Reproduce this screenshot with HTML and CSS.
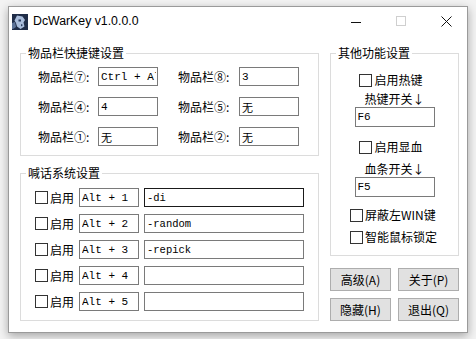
FILE: index.html
```html
<!DOCTYPE html>
<html lang="zh-CN">
<head>
<meta charset="utf-8">
<title>DcWarKey v1.0.0.0</title>
<link rel="stylesheet" href="styles.css">
</head>
<body>
<div class="window">
  <div class="titlebar">
    <svg class="app-icon" viewBox="0 0 16 16" aria-hidden="true">
      <rect width="16" height="16" fill="#1f2d48"/>
      <path d="M5 1.5 L10.5 2.5 L13 6 L11.5 8.5 L12.5 12.5 L8.5 15 L5 12.5 L4 9 L2.5 6.5 Z" fill="#a9bddb"/>
      <path d="M6.5 5.5 h2.5 v2 h-2.5 z M9 10 l2 1 l-2 1.5 z" fill="#2a3c5e"/>
      <path d="M0 9 L3 8 L4 13 L1 15 L0 15 Z" fill="#5d7499"/>
    </svg>
    <span class="title">DcWarKey v1.0.0.0</span>
    <div class="controls">
      <span class="ctl ctl-min"><svg width="10" height="1" viewBox="0 0 10 1"><rect width="10" height="1" fill="#111"/></svg></span>
      <span class="ctl ctl-max"><svg width="10" height="10" viewBox="0 0 10 10"><rect x="0.5" y="0.5" width="9" height="9" fill="none" stroke="#cfcfcf"/></svg></span>
      <span class="ctl ctl-close"><svg width="11" height="11" viewBox="0 0 11 11"><path d="M0.5 0.5 L10.5 10.5 M10.5 0.5 L0.5 10.5" stroke="#111" stroke-width="1"/></svg></span>
    </div>
  </div>

  <div class="client">
    <div class="col-left">
      <fieldset class="group">
        <legend>物品栏快捷键设置</legend>
        <div class="items-grid">
          <span class="lbl">物品栏⑦:</span><input class="field key" type="text" value="Ctrl + Alt + 7">
          <span class="lbl">物品栏⑧:</span><input class="field key" type="text" value="3">
          <span class="lbl">物品栏④:</span><input class="field key" type="text" value="4">
          <span class="lbl">物品栏⑤:</span><input class="field key" type="text" value="无">
          <span class="lbl">物品栏①:</span><input class="field key" type="text" value="无">
          <span class="lbl">物品栏②:</span><input class="field key" type="text" value="无">
        </div>
      </fieldset>

      <fieldset class="group group-chat">
        <legend>喊话系统设置</legend>
        <div class="chat">
          <div class="chat-row"><span class="cb"></span><span class="cb-text">启用</span><input class="field key alt" type="text" value="Alt + 1"><input class="field msg focus" type="text" value="-di"></div>
          <div class="chat-row"><span class="cb"></span><span class="cb-text">启用</span><input class="field key alt" type="text" value="Alt + 2"><input class="field msg" type="text" value="-random"></div>
          <div class="chat-row"><span class="cb"></span><span class="cb-text">启用</span><input class="field key alt" type="text" value="Alt + 3"><input class="field msg" type="text" value="-repick"></div>
          <div class="chat-row"><span class="cb"></span><span class="cb-text">启用</span><input class="field key alt" type="text" value="Alt + 4"><input class="field msg" type="text" value=""></div>
          <div class="chat-row"><span class="cb"></span><span class="cb-text">启用</span><input class="field key alt" type="text" value="Alt + 5"><input class="field msg" type="text" value=""></div>
        </div>
      </fieldset>
    </div>

    <div class="col-right">
      <fieldset class="group">
        <legend>其他功能设置</legend>
        <div class="other">
          <div class="check-row centered"><span class="cb"></span><span class="cb-text">启用热键</span></div>
          <div class="sub-label">热键开关↓</div>
          <input class="field hk" type="text" value="F6">
          <div class="check-row centered gap-big"><span class="cb"></span><span class="cb-text">启用显血</span></div>
          <div class="sub-label gap-mid">血条开关↓</div>
          <input class="field hk" type="text" value="F5">
          <div class="check-row left gap-lg"><span class="cb"></span><span class="cb-text">屏蔽左WIN键</span></div>
          <div class="check-row left gap-mid"><span class="cb"></span><span class="cb-text">智能鼠标锁定</span></div>
        </div>
      </fieldset>
      <div class="buttons">
        <button class="btn" type="button">高级(A)</button>
        <button class="btn" type="button">关于(P)</button>
        <button class="btn" type="button">隐藏(H)</button>
        <button class="btn" type="button">退出(Q)</button>
      </div>
    </div>
  </div>
</div>
</body>
</html>
```

FILE: styles.css
```css
* {
  box-sizing: border-box;
}

html, body {
  height: 100%;
}

body {
  margin: 0;
  background: #f3f3f3;
  font-family: "Noto Sans CJK SC", "Noto Sans", sans-serif;
  font-size: 12px;
  color: #000;
  overflow: hidden;
}

.window {
  margin: 6px 0 0 8px;
  width: 460px;
  height: 327px;
  border: 1px solid #9a9a9a;
  background: #fff;
  box-shadow: 0 3px 9px rgba(0, 0, 0, 0.32);
  display: flex;
  flex-direction: column;
}

.titlebar {
  flex: none;
  height: 30px;
  display: flex;
  align-items: center;
}

.app-icon {
  width: 16px;
  height: 16px;
  margin-left: 3px;
  flex: none;
}

.title {
  margin-left: 5px;
  font-family: "Liberation Sans", Arial, sans-serif;
  font-size: 12.3px;
  line-height: 16px;
  margin-top: -2px;
}

.controls {
  margin-left: auto;
  display: flex;
  height: 30px;
}

.ctl {
  display: flex;
  align-items: center;
  justify-content: center;
  height: 30px;
}

.ctl svg {
  display: block;
}

.ctl-min {
  width: 46px;
  padding-right: 3px;
  padding-top: 1px;
}

.ctl-max {
  width: 46px;
  padding-right: 5px;
  padding-bottom: 2px;
}

.ctl-close {
  width: 41px;
  padding-bottom: 1px;
}

.client {
  display: flex;
  gap: 11px;
  padding: 8px 8px 0 11px;
}

.col-left {
  width: 299px;
  display: flex;
  flex-direction: column;
  gap: 9px;
}

.col-right {
  width: 129px;
  display: flex;
  flex-direction: column;
}

fieldset.group {
  margin: 0;
  padding: 0;
  min-width: 0;
  border: 1px solid #dcdcdc;
}

legend {
  margin-left: 5px;
  padding: 0 2px;
  font-size: 12px;
  line-height: 16px;
}

.items-grid {
  display: grid;
  grid-template-columns: 60px 80px 61px 60px;
  grid-auto-rows: 19px;
  row-gap: 11px;
  padding: 6px 0 9px 17px;
}

.lbl {
  line-height: 19px;
  white-space: nowrap;
}

.field {
  height: 19px;
  border: 1px solid #7a7a7a;
  border-radius: 0;
  padding: 0 1px 0 2px;
  margin: 0;
  background: #fff;
  color: #000;
  font-family: "Liberation Mono", "Noto Sans CJK SC", monospace;
  font-size: 11px;
  outline: none;
}

.key {
  width: 60px;
}

.chat {
  display: flex;
  flex-direction: column;
  gap: 7px;
  padding: 7px 0 9px 14px;
}

.chat-row {
  display: flex;
  align-items: center;
  height: 19px;
}

.cb {
  flex: none;
  width: 13px;
  height: 13px;
  border: 1px solid #333;
  background: #fff;
}

.cb-text {
  margin-left: 2px;
  line-height: 16px;
  white-space: nowrap;
}

.chat-row .alt {
  margin-left: 5px;
}

.msg {
  width: 160px;
  margin-left: 5px;
  font-size: 10.5px;
}

.msg.focus {
  border-color: #1a1a1a;
}

.other {
  display: flex;
  flex-direction: column;
  align-items: center;
  padding: 11px 0 10px;
}

.check-row {
  display: flex;
  align-items: center;
  height: 16px;
}

.check-row.centered {
  margin-right: 7px;
}

.check-row.left {
  align-self: stretch;
  padding-left: 19px;
}

.sub-label {
  margin-top: 3px;
  line-height: 16px;
}

.hk {
  width: 80px;
  height: 20px;
}

.gap-big {
  margin-top: 12px;
}

.gap-mid {
  margin-top: 6px;
}

.gap-lg {
  margin-top: 10px;
}

.buttons {
  margin-top: 12px;
  display: grid;
  grid-template-columns: 61px 61px;
  grid-auto-rows: 23px;
  column-gap: 7px;
  row-gap: 7px;
}

.btn {
  margin: 0;
  padding: 0;
  background: #e1e1e1;
  border: 1px solid #adadad;
  border-radius: 0;
  color: #000;
  font-family: "Noto Sans CJK SC", sans-serif;
  font-size: 12px;
  line-height: 16px;
}
```
